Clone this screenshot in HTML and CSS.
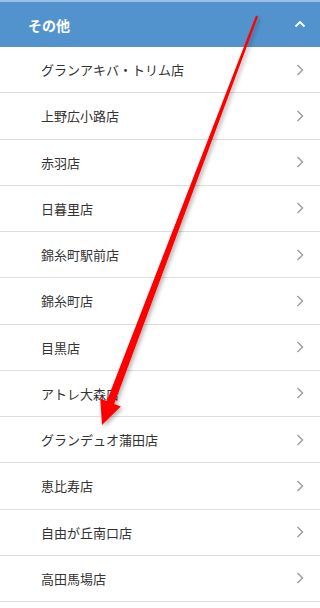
FILE: index.html
```html
<!DOCTYPE html>
<html lang="ja">
<head>
<meta charset="utf-8">
<link rel="stylesheet" href="styles.css">
</head>
<body>
<div class="menu">
  <div class="head">
    <span class="head-title">その他</span>
    <svg class="caret" width="12" height="8" viewBox="0 0 12 8"><path d="M1.5 6.5 L6 2 L10.5 6.5" fill="none" stroke="#fff" stroke-width="1.8"/></svg>
  </div>
  <ul class="list">
    <li class="item"><span>グランアキバ・トリム店</span><svg class="chev" width="8" height="12" viewBox="0 0 8 12"><path d="M1.5 1 L6.5 6 L1.5 11" fill="none" stroke="#a0a0a0" stroke-width="1.5"/></svg></li>
    <li class="item"><span>上野広小路店</span><svg class="chev" width="8" height="12" viewBox="0 0 8 12"><path d="M1.5 1 L6.5 6 L1.5 11" fill="none" stroke="#a0a0a0" stroke-width="1.5"/></svg></li>
    <li class="item"><span>赤羽店</span><svg class="chev" width="8" height="12" viewBox="0 0 8 12"><path d="M1.5 1 L6.5 6 L1.5 11" fill="none" stroke="#a0a0a0" stroke-width="1.5"/></svg></li>
    <li class="item"><span>日暮里店</span><svg class="chev" width="8" height="12" viewBox="0 0 8 12"><path d="M1.5 1 L6.5 6 L1.5 11" fill="none" stroke="#a0a0a0" stroke-width="1.5"/></svg></li>
    <li class="item"><span>錦糸町駅前店</span><svg class="chev" width="8" height="12" viewBox="0 0 8 12"><path d="M1.5 1 L6.5 6 L1.5 11" fill="none" stroke="#a0a0a0" stroke-width="1.5"/></svg></li>
    <li class="item"><span>錦糸町店</span><svg class="chev" width="8" height="12" viewBox="0 0 8 12"><path d="M1.5 1 L6.5 6 L1.5 11" fill="none" stroke="#a0a0a0" stroke-width="1.5"/></svg></li>
    <li class="item"><span>目黒店</span><svg class="chev" width="8" height="12" viewBox="0 0 8 12"><path d="M1.5 1 L6.5 6 L1.5 11" fill="none" stroke="#a0a0a0" stroke-width="1.5"/></svg></li>
    <li class="item"><span>アトレ大森店</span><svg class="chev" width="8" height="12" viewBox="0 0 8 12"><path d="M1.5 1 L6.5 6 L1.5 11" fill="none" stroke="#a0a0a0" stroke-width="1.5"/></svg></li>
    <li class="item"><span>グランデュオ蒲田店</span><svg class="chev" width="8" height="12" viewBox="0 0 8 12"><path d="M1.5 1 L6.5 6 L1.5 11" fill="none" stroke="#a0a0a0" stroke-width="1.5"/></svg></li>
    <li class="item"><span>恵比寿店</span><svg class="chev" width="8" height="12" viewBox="0 0 8 12"><path d="M1.5 1 L6.5 6 L1.5 11" fill="none" stroke="#a0a0a0" stroke-width="1.5"/></svg></li>
    <li class="item"><span>自由が丘南口店</span><svg class="chev" width="8" height="12" viewBox="0 0 8 12"><path d="M1.5 1 L6.5 6 L1.5 11" fill="none" stroke="#a0a0a0" stroke-width="1.5"/></svg></li>
    <li class="item"><span>高田馬場店</span><svg class="chev" width="8" height="12" viewBox="0 0 8 12"><path d="M1.5 1 L6.5 6 L1.5 11" fill="none" stroke="#a0a0a0" stroke-width="1.5"/></svg></li>
  </ul>
</div>
<svg class="arrow" width="320" height="608" viewBox="0 0 320 608">
  <defs>
    <filter id="sh" x="-20%" y="-20%" width="140%" height="140%">
      <feDropShadow dx="2" dy="2" stdDeviation="2" flood-color="#000" flood-opacity="0.3"/>
    </filter>
  </defs>
  <polygon filter="url(#sh)" fill="#ff0000" points="258,16.4 256,15.6 106.8,401.1 100.2,398.6 102,425 120.8,406.4 114.2,403.9"/>
</svg>
</body>
</html>
```
FILE: styles.css
```css
html, body {
  margin: 0;
  padding: 0;
  background: #fff;
}
body {
  width: 320px;
  height: 608px;
  overflow: hidden;
  position: relative;
  font-family: "Noto Sans CJK JP", "Noto Sans", sans-serif;
}
.menu {
  width: 320px;
}
.head {
  height: 45px;
  background: #5393cd;
  border-top: 2px solid #9cc0e4;
  display: flex;
  align-items: center;
  justify-content: space-between;
  padding: 0 14px 0 28px;
  box-sizing: content-box;
}
.head-title {
  color: #fff;
  font-weight: bold;
  font-size: 14px;
}
.caret {
  display: block;
  margin-top: -2px;
}
.list {
  list-style: none;
  margin: 0;
  padding: 0;
}
.item {
  height: 46.25px;
  box-sizing: border-box;
  border-bottom: 1px solid #dedede;
  display: flex;
  align-items: center;
  justify-content: space-between;
  padding: 0 16px 0 41px;
  color: #333;
  font-size: 13px;
}
.chev {
  display: block;
}
.arrow {
  position: absolute;
  left: 0;
  top: 0;
  pointer-events: none;
}
```
